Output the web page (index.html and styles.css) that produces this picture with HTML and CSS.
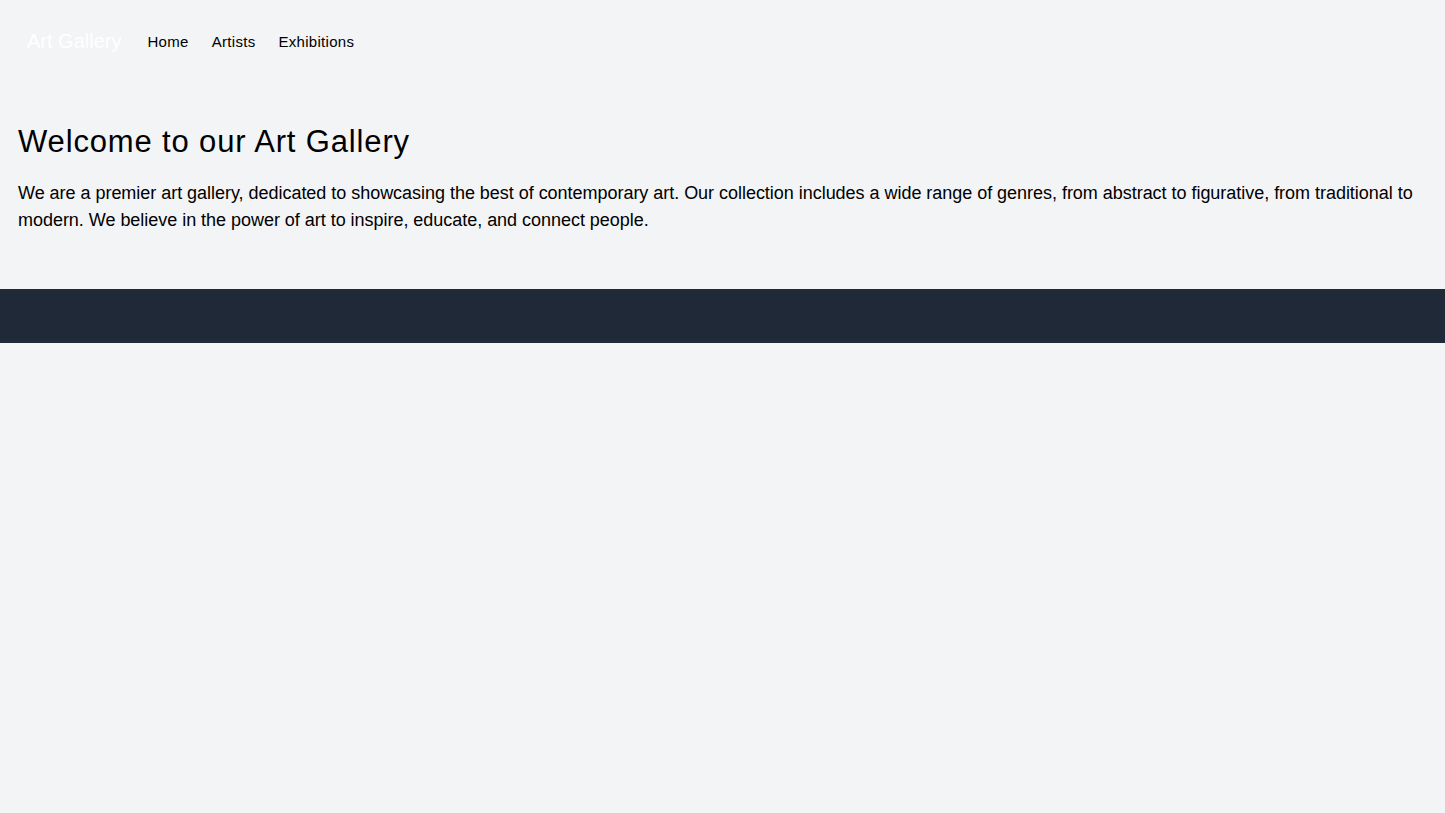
FILE: index.html
```html
<!DOCTYPE html>
<html lang="en">
<head>
<meta charset="utf-8">
<title>Art Gallery</title>
<link rel="stylesheet" href="styles.css">
</head>
<body>
<nav class="nav">
  <a class="brand" href="#">Art Gallery</a>
  <ul class="links">
    <li><a href="#">Home</a></li>
    <li><a href="#">Artists</a></li>
    <li><a href="#">Exhibitions</a></li>
  </ul>
</nav>
<main class="main">
  <h1 class="title">Welcome to our Art Gallery</h1>
  <p class="intro">We are a premier art gallery, dedicated to showcasing the best of contemporary art. Our collection includes a wide range of genres, from abstract to figurative, from traditional to modern. We believe in the power of art to inspire, educate, and connect people.</p>
</main>
<footer class="footer"></footer>
</body>
</html>
```
FILE: styles.css
```css
*, *::before, *::after {
  box-sizing: border-box;
}
html, body {
  margin: 0;
  padding: 0;
}
body {
  background: #f3f4f6;
  font-family: "Liberation Sans", Arial, sans-serif;
  color: #000;
  min-height: 813px;
}
a {
  color: inherit;
  text-decoration: none;
}
.nav {
  display: flex;
  align-items: center;
  padding: 24px 27px;
  height: 82px;
}
.brand {
  color: #fff;
  font-size: 20px;
  margin-right: 26px;
}
.links {
  display: flex;
  gap: 23px;
  list-style: none;
  margin: 0;
  padding: 0;
  font-size: 15px;
  letter-spacing: 0.3px;
}
.main {
  padding: 42px 18px 0;
  height: 207px;
}
.title {
  font-size: 31px;
  font-weight: 400;
  line-height: 36px;
  letter-spacing: 0.85px;
  margin: 0 0 20px;
}
.intro {
  font-size: 18px;
  line-height: 27px;
  letter-spacing: -0.03px;
  margin: 0;
}
.footer {
  background: #1f2937;
  height: 54px;
}
```
